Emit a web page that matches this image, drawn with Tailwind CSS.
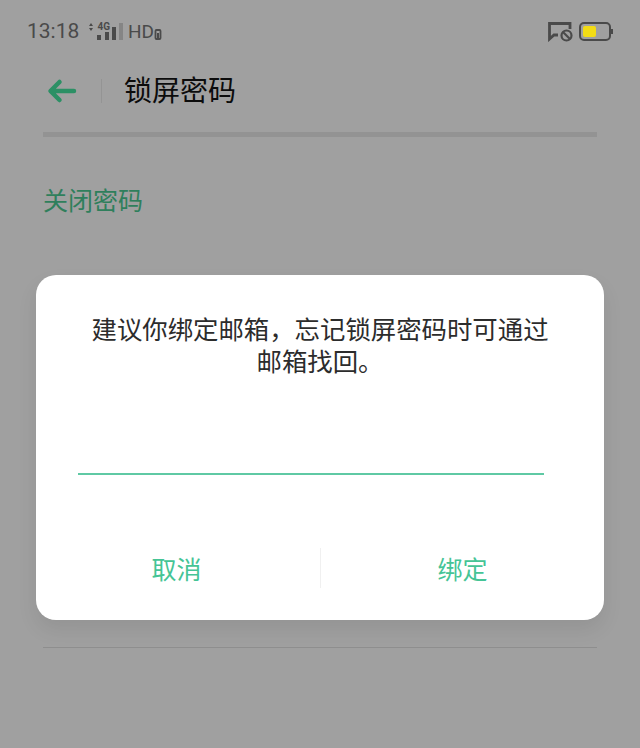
<!DOCTYPE html>
<html lang="zh-CN">
<head>
  <meta charset="UTF-8">
  <meta name="viewport" content="width=device-width, initial-scale=1.0">
  <title>锁屏密码</title>
  <script src="https://cdn.jsdelivr.net/npm/@tailwindcss/browser@4"></script>
</head>
<body class="bg-[#a0a0a0] font-['Roboto','Noto_Sans_CJK_SC',sans-serif]">
<div class="relative w-[640px] h-[748px] overflow-hidden">

  <!-- Status bar -->
  <div class="h-[62px] pl-[27px] pr-[27px] flex items-center justify-between text-[#4a4a4a]">
    <div class="flex items-center">
      <span class="w-[59px] text-[21px] leading-none">13:18</span>
      <svg width="40" height="22" viewBox="0 0 40 22">
        <path d="M3 6 5 3 7 6ZM3 8 5 11 7 8Z" fill="#4a4a4a"/>
        <text x="11.500" y="10" font-size="10" font-weight="700" fill="#4a4a4a" font-family="Roboto">4G</text>
        <rect x="11" y="15" width="4" height="5" fill="#4a4a4a"/>
        <rect x="19" y="12" width="4" height="8" fill="#4a4a4a"/>
        <rect x="26" y="7" width="4" height="13" fill="#4a4a4a"/>
        <rect x="33" y="3" width="4" height="17" fill="#858585"/>
      </svg>
      <span class="ml-[2px] text-[19px] leading-none">HD</span>
      <svg class="mt-[5px]" width="8" height="12" viewBox="0 0 8 12"><rect x="1.500" y="2" width="5" height="9" rx="1" fill="none" stroke="#4a4a4a" stroke-width="1.800"/><rect x="3" y="5" width="2" height="5" fill="#4a4a4a"/></svg>
    </div>
    <div class="flex items-center gap-[6px]">
      <svg width="25" height="22" viewBox="0 0 25 22">
        <path d="M1.500 16V3.500H22V9M1.500 14V19L6 15H10" fill="none" stroke="#4a4a4a" stroke-width="2.800"/>
        <circle cx="18.500" cy="15.500" r="5" fill="none" stroke="#4a4a4a" stroke-width="2.200"/>
        <path d="M15 12 22 19" stroke="#4a4a4a" stroke-width="2.200"/>
      </svg>
      <div class="flex items-center">
        <div class="w-[32px] h-[19px] rounded-[5px] border-2 border-[#4a4a4a] p-[2px]">
          <div class="w-[13px] h-full rounded-[2px] bg-[#f3dc14]"></div>
        </div>
        <div class="w-[2px] h-[5px] bg-[#4a4a4a]"></div>
      </div>
    </div>
  </div>

  <!-- Header -->
  <div class="h-[58px] flex items-center pl-[47px]">
    <svg width="30" height="26" viewBox="0 0 30 26">
      <path d="M27 13H4M12.500 4 3.500 13 12.500 22" fill="none" stroke="#2c9065" stroke-width="4.500" stroke-linecap="round" stroke-linejoin="round"/>
    </svg>
    <div class="ml-[24px] w-px h-[24px] bg-[#949494]"></div>
    <h1 class="ml-[22px] pt-[2px] text-[28px] leading-none text-[#0c0c0c]">锁屏密码</h1>
  </div>

  <!-- Settings list -->
  <div class="mx-[43px] mt-[12px] h-[5px] bg-[#939393]"></div>
  <p class="ml-[43px] mt-[52px] text-[25px] leading-none text-[#2f7f5c]">关闭密码</p>
  <div class="mx-[43px] mt-[433px] h-px bg-[#8e8e8e]"></div>

  <!-- Dialog -->
  <div class="absolute left-[36px] top-[275px] w-[568px] h-[345px] rounded-[20px] bg-white shadow-[0_10px_20px_rgba(0,0,0,0.08)] flex flex-col">
    <p class="mt-[39px] text-center text-[25.400px] leading-[32px] text-[#2c2c2c]">建议你绑定邮箱，忘记锁屏密码时可通过<br>邮箱找回。</p>
    <div class="ml-[42px] mr-[60px] mt-[95px] h-[2px] bg-[#5fc9a4]"></div>
    <div class="mt-[73px] flex items-center">
      <span class="w-[284px] pt-[4px] pr-[3px] text-center text-[25px] leading-none text-[#45c495]">取消</span>
      <div class="w-px h-[40px] bg-[#f0f0f0]"></div>
      <span class="w-[283px] pt-[4px] text-center text-[25px] leading-none text-[#45c495]">绑定</span>
    </div>
  </div>

</div>
</body>
</html>
